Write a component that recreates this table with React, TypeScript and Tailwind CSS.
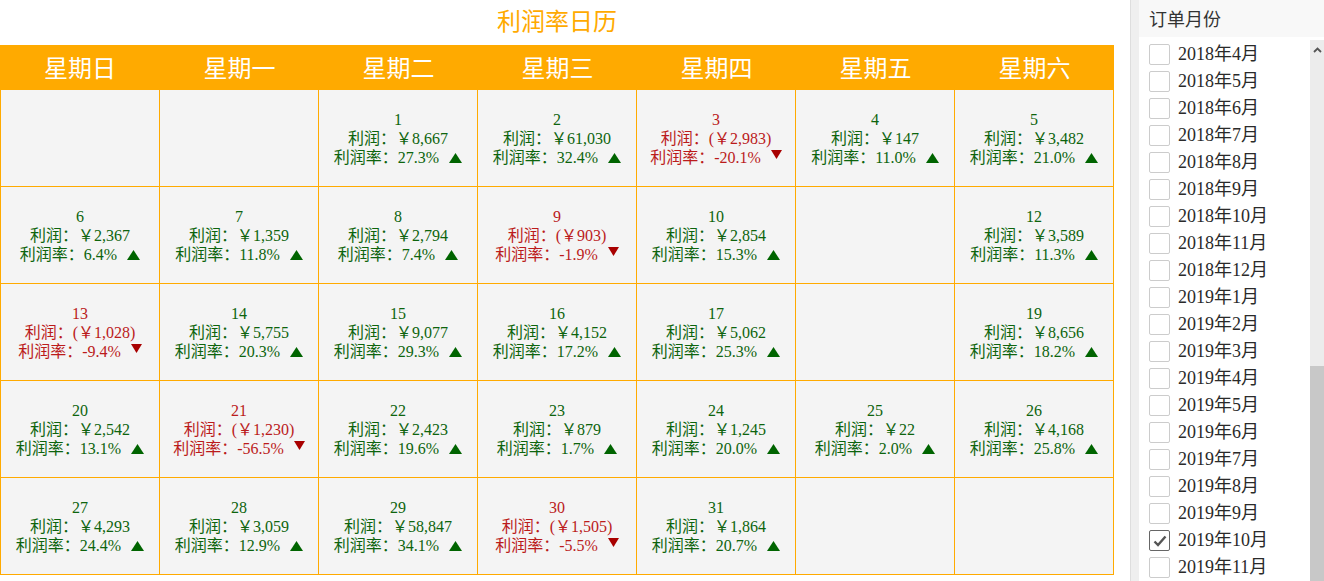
import React from "react";

type Day = { d: number; profit: string; rate: string; up: boolean } | null;

const weeks: Day[][] = [
  [
    null,
    null,
    { d: 1, profit: "￥8,667", rate: "27.3%", up: true },
    { d: 2, profit: "￥61,030", rate: "32.4%", up: true },
    { d: 3, profit: "(￥2,983)", rate: "-20.1%", up: false },
    { d: 4, profit: "￥147", rate: "11.0%", up: true },
    { d: 5, profit: "￥3,482", rate: "21.0%", up: true },
  ],
  [
    { d: 6, profit: "￥2,367", rate: "6.4%", up: true },
    { d: 7, profit: "￥1,359", rate: "11.8%", up: true },
    { d: 8, profit: "￥2,794", rate: "7.4%", up: true },
    { d: 9, profit: "(￥903)", rate: "-1.9%", up: false },
    { d: 10, profit: "￥2,854", rate: "15.3%", up: true },
    null,
    { d: 12, profit: "￥3,589", rate: "11.3%", up: true },
  ],
  [
    { d: 13, profit: "(￥1,028)", rate: "-9.4%", up: false },
    { d: 14, profit: "￥5,755", rate: "20.3%", up: true },
    { d: 15, profit: "￥9,077", rate: "29.3%", up: true },
    { d: 16, profit: "￥4,152", rate: "17.2%", up: true },
    { d: 17, profit: "￥5,062", rate: "25.3%", up: true },
    null,
    { d: 19, profit: "￥8,656", rate: "18.2%", up: true },
  ],
  [
    { d: 20, profit: "￥2,542", rate: "13.1%", up: true },
    { d: 21, profit: "(￥1,230)", rate: "-56.5%", up: false },
    { d: 22, profit: "￥2,423", rate: "19.6%", up: true },
    { d: 23, profit: "￥879", rate: "1.7%", up: true },
    { d: 24, profit: "￥1,245", rate: "20.0%", up: true },
    { d: 25, profit: "￥22", rate: "2.0%", up: true },
    { d: 26, profit: "￥4,168", rate: "25.8%", up: true },
  ],
  [
    { d: 27, profit: "￥4,293", rate: "24.4%", up: true },
    { d: 28, profit: "￥3,059", rate: "12.9%", up: true },
    { d: 29, profit: "￥58,847", rate: "34.1%", up: true },
    { d: 30, profit: "(￥1,505)", rate: "-5.5%", up: false },
    { d: 31, profit: "￥1,864", rate: "20.7%", up: true },
    null,
    null,
  ],
];

const weekdays = ["星期日", "星期一", "星期二", "星期三", "星期四", "星期五", "星期六"];

const months = [
  "2018年4月", "2018年5月", "2018年6月", "2018年7月", "2018年8月", "2018年9月",
  "2018年10月", "2018年11月", "2018年12月", "2019年1月", "2019年2月", "2019年3月",
  "2019年4月", "2019年5月", "2019年6月", "2019年7月", "2019年8月", "2019年9月",
  "2019年10月", "2019年11月",
];

function DayCell({ day }: { day: Day }) {
  return (
    <div className="w-[159px] h-[97px] border-r border-b border-[#ffaa00] bg-[#f4f4f4] flex flex-col items-center justify-center text-[16px] leading-[19px] font-['Liberation_Serif','Noto_Sans_CJK_SC',serif]">
      {day && (
        <div className={`flex flex-col items-center ${day.up ? "text-[#0d640d]" : "text-[#bb1b1b]"}`}>
          <span>{day.d}</span>
          <span>利润：{day.profit}</span>
          <span className="flex items-center">
            利润率：{day.rate}
            {day.up ? (
              <svg className="ml-[10px] mt-[1px]" width="13" height="10" viewBox="0 0 13 10">
                <polygon points="6.5,0 13,10 0,10" fill="#006400" />
              </svg>
            ) : (
              <svg className="ml-[10px] mb-[5px]" width="11" height="9" viewBox="0 0 11 9">
                <polygon points="0,0 11,0 5.5,9" fill="#a80000" />
              </svg>
            )}
          </span>
        </div>
      )}
    </div>
  );
}

export default function App() {
  return (
    <div className="flex h-[581px] overflow-hidden bg-white">
      <div className="w-[1130px] shrink-0">
        <div className="w-[1114px] h-[45px] flex items-center justify-center text-[24px] text-[#ffaa00] font-['Noto_Sans_CJK_SC',sans-serif] pb-[5px]">
          利润率日历
        </div>
        <div className="w-[1114px] border-l border-[#ffaa00]">
          <div className="flex h-[45px] bg-[#ffaa00] -ml-px w-[1114px]">
            {weekdays.map((w) => (
              <div key={w} className="w-[159px] first:w-[160px] flex items-center justify-center pb-[2px] text-white text-[24px] font-['Noto_Sans_CJK_SC',sans-serif]">
                {w}
              </div>
            ))}
          </div>
          {weeks.map((week, i) => (
            <div key={i} className="flex">
              {week.map((day, j) => (
                <DayCell key={j} day={day} />
              ))}
            </div>
          ))}
        </div>
      </div>

      <div className="flex flex-1">
        <div className="w-[9px] border-l border-[#dedede] bg-[#efefef]" />
        <div className="flex-1 flex flex-col">
          <div className="h-[37px] bg-[#f8f8f8] flex items-center pl-[10px] text-[18px] text-[#333333] font-['Noto_Sans_CJK_SC',sans-serif]">
            订单月份
          </div>
          <div className="flex flex-1 min-h-0">
            <div className="flex-1 pt-[4px] pl-[10px]">
              {months.map((m) => {
                const checked = m === "2019年10月";
                return (
                  <div key={m} className="h-[27px] flex items-center gap-[8px]">
                    <div
                      className={`w-[21px] h-[21px] rounded-[2px] bg-white border flex items-center justify-center ${
                        checked ? "border-[#666666]" : "border-[#cccccc]"
                      }`}
                    >
                      {checked && (
                        <svg width="14" height="12" viewBox="0 0 14 12">
                          <polyline points="1.5,6.5 5,10 12.5,1.5" fill="none" stroke="#555555" strokeWidth="2.4" />
                        </svg>
                      )}
                    </div>
                    <span className="text-[18px] text-[#2a2a2a] font-['Liberation_Serif','Noto_Sans_CJK_SC',serif]">
                      {m}
                    </span>
                  </div>
                );
              })}
            </div>
            <div className="w-[14px] mt-[3px] bg-[#ececec] flex flex-col">
              <div className="h-[20px] flex items-center justify-center">
                <svg width="9" height="6" viewBox="0 0 9 6">
                  <polyline points="1,5 4.5,1.5 8,5" fill="none" stroke="#555555" strokeWidth="1.8" />
                </svg>
              </div>
              <div className="flex-1" />
              <div className="h-[215px] bg-[#c8c8c8]" />
            </div>
          </div>
        </div>
      </div>
    </div>
  );
}
